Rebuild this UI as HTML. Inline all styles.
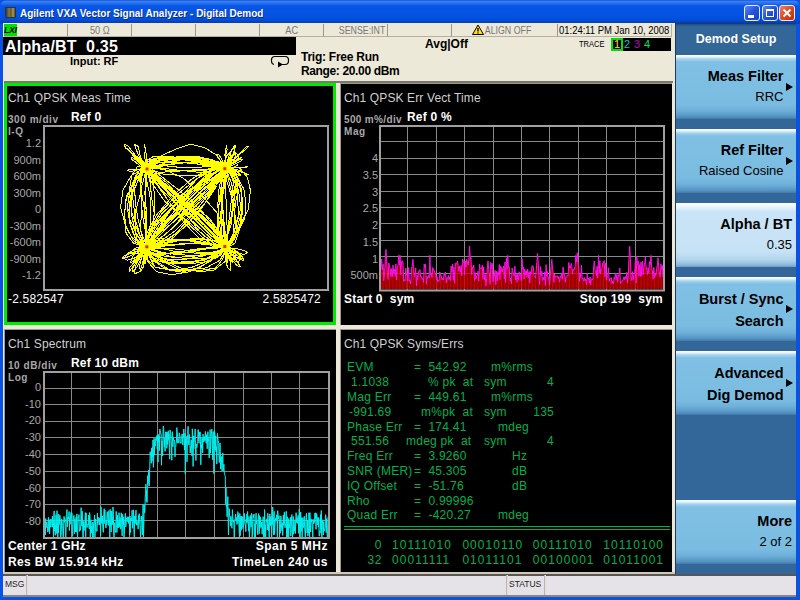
<!DOCTYPE html>
<html><head><meta charset="utf-8"><title>Agilent VXA Vector Signal Analyzer - Digital Demod</title>
<style>
html,body{margin:0;padding:0;}
body{width:800px;height:600px;overflow:hidden;position:relative;background:#ece9d8;font-family:"Liberation Sans",Arial,sans-serif;}
div{position:absolute;box-sizing:border-box;white-space:nowrap;}
#frame{left:0;top:0;width:800px;height:600px;background:#0852e4;}
#title{left:0;top:0;width:800px;height:24px;background:linear-gradient(#0a40c4 0px,#3a84f6 1px,#2a72f0 3px,#0656e6 6px,#0452e2 16px,#034cd8 20px,#023cb8 23px,#0a50d8 24px);border-radius:7px 7px 0 0;}
#ttext{left:20px;top:6px;font-size:11px;line-height:14px;font-weight:bold;color:#fff;text-shadow:1px 1px 0 #0a2a80;transform:scaleX(0.91);transform-origin:0 0}
#client{left:3px;top:23px;width:793px;height:573px;background:#ece9d8;}
.cell{top:24px;height:13px;border-left:1px solid #9c988c;border-bottom:1px solid #b4b0a4;font-size:11px;line-height:12px;color:#777;text-align:center;}
.cell span{display:inline-block;transform:scaleX(0.84);}
.btn{top:5px;width:16px;height:16px;border-radius:3px;border:1px solid #e8eefc;}
.panel{background:#000;}
.pb{border-top:1px solid #9c9a90;border-left:1px solid #9c9a90;}
.pt{font-size:12px;color:#d0d0d0;letter-spacing:0.12px}
.sm{font-size:10px;font-weight:bold;color:#a8a8a8;letter-spacing:0.55px}
.wb{font-size:12px;font-weight:bold;color:#fff;letter-spacing:0.2px}
.yl{text-align:right;line-height:14px;}
svg{position:absolute;left:0;top:0;}
.key{left:676px;width:120px;height:64px;background:linear-gradient(#ffffff 0px,#e4f2fb 2px,#a6d3ee 4px,#80c0e4 7px,#7abce1 49px,#6dafd8 56px,#5290c0 62px,#3f78a8 64px);}
.key.sel{background:linear-gradient(#ffffff 0px,#e8f4fc 4px,#c9e4f6 9px,#c6e2f5 49px,#b2d4ec 57px,#8cb8da 62px,#6a9cc4 64px);}
.k1{top:13px;font-size:14.5px;font-weight:bold;color:#000;}
.k1b{top:36px;}
.k2{top:34px;font-size:13px;color:#000;}
.arr{right:3px;top:27.5px;width:0;height:0;border-left:7px solid #000;border-top:4px solid transparent;border-bottom:4px solid transparent;}
.g{color:#00b050;font-size:12px;line-height:15px;letter-spacing:0.25px}
.sb{top:574px;height:22px;border-left:1px solid #fff;border-top:1px solid #fff;border-right:1px solid #9a98a0;font-size:9px;color:#000;line-height:20px;}
</style></head><body>
<div id="frame"></div>
<div id="title"></div>
<!-- title icon -->
<div style="left:5px;top:7px;width:11px;height:11px;background:linear-gradient(90deg,#3b3a2a,#8a7c3a 35%,#5b5430 55%,#b0a050 78%,#4a4630);border:1px solid #2a3050"></div>
<div id="ttext">Agilent VXA Vector Signal Analyzer - Digital Demod</div>
<div class="btn" style="left:744px;background:linear-gradient(135deg,#5a8af0,#2452dc 50%,#1a3ec4);"><div style="left:3px;top:9px;width:6px;height:3px;background:#fff"></div></div>
<div class="btn" style="left:762px;background:linear-gradient(135deg,#5a8af0,#2452dc 50%,#1a3ec4);"><div style="left:3px;top:3px;width:8px;height:8px;border:1px solid #fff;border-top:2px solid #fff"></div></div>
<div class="btn" style="left:779px;background:linear-gradient(135deg,#f08060,#e0481c 50%,#c02c08);"></div><svg width="800" height="600"><path d="M783.5 9.5L790.5 16.5M790.5 9.5L783.5 16.5" stroke="#fff" stroke-width="2"/></svg>

<div id="client"></div>

<!-- top status row -->
<div style="left:4px;top:24px;width:13px;height:12px;background:#00e000;font-size:9px;font-weight:bold;font-style:italic;line-height:12px;color:#000;letter-spacing:-0.5px">LXI</div>
<div style="left:4px;top:36px;width:668px;height:1px;background:#b4b0a4"></div>
<div class="cell" style="left:67px;width:64px;"><span>50 &#937;</span></div>
<div class="cell" style="left:131px;width:64px;"></div>
<div class="cell" style="left:195px;width:64px;"></div>
<div class="cell" style="left:259px;width:64px;"><span>AC</span></div>
<div class="cell" style="left:323px;width:64px;"><span style="margin-left:9px;transform:scaleX(0.8)">SENSE:INT</span></div>
<div class="cell" style="left:387px;width:64px;"></div>
<div class="cell" style="left:451px;width:106px;"><span style="margin-left:7px;transform:scaleX(0.8)">ALIGN OFF</span></div>
<div class="cell" style="left:557px;width:115px;color:#000;font-size:11px;border-right:1px solid #b4b0a4"><span style="transform:scaleX(0.86);margin-left:-8px;margin-right:-8px">01:24:11 PM Jan 10, 2008</span></div>
<svg width="800" height="600" style="pointer-events:none"><path d="M478 25L483.5 34.5H472.5Z" fill="#ffe000" stroke="#000" stroke-width="1" stroke-linejoin="round"/><path d="M478 28V31.5" stroke="#000" stroke-width="1.4"/><rect x="477.4" y="32.4" width="1.2" height="1.2" fill="#000"/></svg>

<!-- active function band -->
<div style="left:3px;top:37px;width:293px;height:18px;background:#000;"></div>
<div style="left:5px;top:36.5px;font-size:16px;font-weight:bold;color:#fff;line-height:20px;letter-spacing:0.2px">Alpha/BT&nbsp;&nbsp;0.35</div>
<div style="left:70px;top:55px;font-size:11px;font-weight:bold;color:#000;line-height:13px">Input: RF</div>
<div style="left:301px;top:50px;font-size:12px;font-weight:bold;color:#000;line-height:14px;letter-spacing:-0.25px">Trig: Free Run</div>
<div style="left:301px;top:64px;font-size:12px;font-weight:bold;color:#000;line-height:14px;letter-spacing:-0.36px">Range: 20.00 dBm</div>
<div style="left:425px;top:37px;font-size:12px;font-weight:bold;color:#000;line-height:14px">Avg|Off</div>
<svg width="800" height="600"><rect x="271.5" y="56.5" width="17" height="8" rx="3.5" fill="none" stroke="#000" stroke-width="1.2"/><rect x="274" y="62" width="8" height="5" fill="#ece9d8"/><path d="M278 61.5L283 64.5L278 67.5Z" fill="#000"/></svg>
<div style="left:579px;top:39px;font-size:9px;color:#000;line-height:11px;transform:scaleX(0.84);transform-origin:0 0">TRACE</div>
<div style="left:611px;top:38px;width:60px;height:13px;background:#000"></div>
<div style="left:611px;top:38px;width:12px;height:13px;border:2px solid #00e000;"></div>
<div style="left:614px;top:38px;font-size:11px;line-height:13px;color:#ffe000;">1</div>
<div style="left:624px;top:38px;font-size:11px;line-height:13px;color:#00c8c8;">2</div>
<div style="left:634px;top:38px;font-size:11px;line-height:13px;color:#c000c0;">3</div>
<div style="left:644px;top:38px;font-size:11px;line-height:13px;color:#00e060;">4</div>

<!-- panels -->
<div style="left:4px;top:81px;width:669px;height:492px;border-top:2px solid #7a786c;"></div>
<div class="panel" style="left:4px;top:83px;width:332px;height:242px;border:3px solid #00ea00;"></div>
<div class="panel pb" style="left:340px;top:83px;width:332px;height:242px;"></div>
<div class="panel pb" style="left:4px;top:329px;width:332px;height:243px;"></div>
<div class="panel pb" style="left:340px;top:329px;width:332px;height:243px;"></div>

<svg width="800" height="600">
<!-- IQ -->
<rect x="44" y="126" width="284" height="164" fill="none" stroke="#a0a0a0" stroke-width="2"/>
<polyline points="146.1,168.7 155.0,158.2 169.6,157.1 190.2,157.9 207.8,162.2 221.1,166.7 225.1,168.5 219.6,166.0 204.5,162.8 185.4,158.1 164.4,156.1 150.7,159.5 146.4,168.0 151.6,182.6 164.9,201.6 186.2,220.1 205.3,236.6 220.5,247.4 225.9,248.0 221.4,241.0 206.4,227.1 185.4,209.9 165.9,189.7 152.4,175.2 145.6,167.4 150.6,168.1 163.1,177.8 181.1,191.9 202.0,211.4 216.7,228.8 224.3,248.1 226.3,260.6 214.1,270.0 199.7,271.8 180.7,268.0 161.3,259.1 144.6,247.4 136.1,233.2 129.7,219.0 129.9,201.3 134.3,188.4 140.6,175.0 146.0,166.6 151.0,162.9 153.2,161.8 154.3,164.7 152.6,164.5 150.1,167.8 146.2,167.2 140.3,166.3 135.8,162.2 131.8,159.5 131.7,157.5 136.4,160.0 145.6,167.7 160.2,179.9 177.2,197.4 196.3,215.6 210.9,232.0 221.7,242.0 224.9,248.1 221.6,243.5 210.8,234.9 193.7,218.2 176.0,199.2 159.5,182.1 145.7,165.8 137.2,156.9 135.3,155.7 136.0,156.0 139.8,158.9 144.1,162.4 146.5,167.1 145.8,170.4 144.1,172.5 142.3,171.5 140.4,171.4 140.0,169.4 146.6,167.6 154.3,167.8 167.0,170.3 180.5,170.4 198.1,169.8 212.1,169.9 225.6,168.1 234.6,164.2 241.3,161.0 243.0,159.1 240.8,159.3 235.2,162.0 225.7,167.8 214.6,177.6 200.1,188.4 185.2,202.8 171.3,217.8 158.0,232.3 146.6,246.7 137.3,258.5 129.8,267.5 129.4,271.5 132.1,267.7 136.8,261.8 145.4,248.2 157.6,230.6 170.5,210.1 185.9,191.1 200.1,175.8 214.8,168.3 226.0,169.0 234.2,175.4 240.7,189.3 242.8,207.9 239.7,225.9 234.2,239.7 224.1,246.8 215.0,247.4 200.9,239.9 185.7,224.3 171.5,205.2 158.4,186.7 146.3,167.3 135.1,154.9 128.2,146.1 124.0,144.3 125.7,148.1 134.3,154.9 146.1,168.2 161.6,182.6 180.4,197.5 196.6,212.7 211.8,227.6 222.8,240.0 226.9,247.3 222.1,251.9 213.3,252.0 196.8,252.1 179.8,249.3 161.5,248.1 144.7,248.8 133.9,250.1 127.3,253.7 124.7,258.9 127.8,260.2 136.1,257.5 144.9,246.8 157.5,233.5 172.2,214.0 186.3,195.5 202.2,178.5 214.6,169.2 225.1,169.4 234.0,176.1 241.9,191.4 241.5,212.5 239.6,229.7 234.8,243.2 226.1,248.5 214.1,243.4 199.7,231.6 184.9,212.0 171.5,192.1 157.4,177.9 144.6,167.9 137.6,166.3 131.8,175.3 129.3,190.8 131.3,210.3 137.2,229.6 145.3,247.8 156.1,261.0 170.4,270.4 183.3,270.6 199.1,268.0 211.9,259.1 225.6,248.2 236.1,234.6 244.8,218.9 246.0,204.0 244.0,189.5 237.3,176.7 224.9,167.1 209.2,161.6 191.9,159.3 174.4,159.3 160.1,160.8 148.6,163.7 147.5,168.1 150.8,170.5 159.3,172.3 172.8,171.6 191.8,170.1 209.8,171.3 224.1,167.7 238.0,167.2 245.4,168.0 247.2,166.4 245.3,167.1 237.9,167.3 225.3,168.8 211.5,166.4 195.2,167.4 179.3,167.3 165.5,165.8 154.2,166.6 145.4,167.3 140.0,168.2 141.0,171.8 141.0,170.2 144.4,171.7 147.2,170.1 145.7,167.2 142.7,164.9 138.8,160.5 137.1,157.6 135.0,157.7 138.1,160.4 146.4,168.9 158.9,179.8 175.6,194.1 193.3,208.9 208.1,222.2 220.4,237.9 225.6,247.9 221.9,253.3 211.5,254.2 195.3,253.1 177.4,251.9 160.5,248.1 145.1,247.8 136.1,247.9 130.8,251.8 132.6,253.7 135.4,253.4 140.7,253.7 146.8,247.5 150.9,239.2 152.9,227.6 154.3,213.2 151.6,197.6 150.1,181.8 145.8,168.1 140.2,156.2 138.2,146.4 134.4,144.4 135.4,147.0 138.2,154.9 146.4,168.3 157.6,184.3 169.9,203.1 184.8,220.2 201.1,236.3 215.4,246.7 225.4,248.1 232.4,242.7 236.5,230.4 234.4,215.8 233.4,199.6 229.0,182.1 225.9,168.5 221.3,158.4 218.2,154.2 217.5,154.7 217.5,156.6 221.2,162.1 225.2,168.0 231.0,172.3 236.3,174.1 241.2,176.1 240.8,175.1 236.5,171.3 226.0,169.0 209.4,163.1 191.3,160.7 171.8,158.7 155.8,158.4 146.0,160.5 145.5,168.4 154.9,176.4 171.8,188.7 189.4,204.0 208.9,217.7 221.3,234.2 226.2,248.7 220.2,260.0 206.2,267.9 184.2,270.2 166.2,268.9 151.2,259.6 145.7,247.6 149.2,231.6 162.2,213.3 181.8,194.7 202.4,181.4 215.2,172.0 225.4,168.4 225.0,172.0 215.0,183.3 198.3,199.0 178.1,216.9 159.8,235.2 146.2,248.0 137.5,258.3 133.8,260.7 134.7,260.9 139.3,257.4 143.1,252.1 146.1,247.5 145.9,244.6 143.6,243.4 141.6,244.7 139.1,246.7 141.5,247.0 146.6,246.8 153.7,246.5 167.2,245.9 180.9,243.8 198.0,243.9 213.1,244.4 225.5,248.2 236.5,252.2 242.0,255.9 244.1,260.2 242.0,260.1 235.9,257.5 225.4,248.2 212.3,233.9 196.5,216.6 181.6,199.5 167.1,183.0 154.0,172.9 144.8,166.9 141.5,169.7 140.5,180.5 140.8,194.2 142.2,212.8 145.2,230.5 146.8,248.1 143.7,260.1 143.3,267.2 140.7,271.2 139.3,267.2 141.5,258.3 144.9,247.8 154.1,234.6 166.3,221.6 179.7,208.8 194.7,193.8 209.9,181.0 224.8,168.0 236.2,157.2 246.5,148.6 248.3,146.0 245.4,147.5 237.4,155.9 224.9,166.4 209.3,186.3 190.7,206.2 175.2,225.3 158.9,239.9 148.9,247.9 146.0,247.3 149.8,239.7 159.1,225.2 172.3,207.9 190.4,189.8 208.7,174.8 226.0,167.9 239.5,167.8 247.5,177.4 250.4,190.2 248.3,209.1 238.6,228.4 226.6,249.6 208.4,262.5 188.9,271.9 171.5,274.8 156.8,271.8 147.9,261.9 146.4,247.3 149.8,230.2 161.0,211.5 178.5,193.6 195.9,179.3 212.8,170.0 226.0,168.3 233.4,174.2 236.6,183.3 233.9,201.3 230.8,217.9 226.6,235.4 224.9,248.0 227.3,256.7 230.8,259.0 233.2,258.3 235.7,255.0 234.3,250.0 226.4,246.9 210.8,247.4 192.5,249.6 172.0,253.3 158.1,254.4 146.8,252.9 146.4,248.2 154.8,237.1 171.2,223.8 190.9,207.4 208.9,191.9 222.5,178.2 225.7,167.7 220.0,162.1 203.6,160.6 183.9,162.9 165.3,165.3 151.6,167.1 145.8,169.1 150.5,166.3 165.2,164.7 184.4,162.6 205.7,162.1 219.9,162.5 226.5,168.1 222.0,175.0 208.6,187.8 191.1,203.4 171.7,217.4 154.9,233.9 145.7,248.1 147.0,259.6 155.4,267.3 172.3,270.2 190.7,267.7 209.5,260.2 226.0,248.3 236.0,232.1 241.3,213.2 239.2,194.4 235.5,179.2 229.6,169.2 224.4,168.8 221.2,172.5 221.4,183.9 220.7,199.7 223.5,216.9 225.3,234.1 225.5,248.0 227.4,257.6 226.5,261.4 226.9,261.1 225.6,257.4 226.3,253.7 225.0,248.5 226.2,243.1 225.7,240.2 225.9,237.8 226.3,240.2 225.9,242.8 225.6,248.7 226.2,253.8 226.6,258.7 225.5,261.1 227.1,262.6 227.0,257.2 225.1,249.2 224.5,234.4 221.7,216.8 222.3,198.7 220.9,182.3 222.4,171.4 226.5,169.0 230.0,171.3 235.2,183.0 237.6,196.7 238.4,215.8 233.8,233.3 225.5,247.9 212.4,257.5 194.6,262.0 176.9,262.4 159.7,258.0 148.9,253.1 145.4,247.3 150.2,243.3 161.3,240.0 177.3,240.2 195.9,238.4 212.4,244.2 225.6,248.1 234.3,251.6 235.4,255.4 234.1,259.2 231.4,259.7 227.0,256.0 226.1,248.5 226.6,237.4 231.7,223.2 232.5,207.1 235.0,191.8 232.7,179.2 226.7,167.5 212.8,160.0 195.3,156.0 176.4,156.9 161.3,159.8 149.9,162.8 145.3,166.9 148.5,172.4 159.7,173.7 176.5,175.1 194.7,175.6 211.7,173.5 225.5,168.3 233.6,162.6 238.8,156.9 237.7,155.0 235.0,152.3 230.5,156.9 225.2,168.4 221.7,183.1 221.5,198.8 221.1,216.0 221.7,231.0 221.9,242.6 225.6,247.9 227.2,246.6 228.0,235.5 226.6,220.5 226.1,203.4 225.7,184.4 226.2,167.8 224.9,155.2 226.1,148.0 226.0,144.8 227.1,149.2 225.6,155.3 225.9,168.5 223.6,181.7 221.8,197.9 220.9,212.4 221.1,226.9 220.8,238.3 226.3,248.3 231.1,255.0 235.9,257.1 240.9,257.4 240.5,256.2 236.7,252.3 225.2,248.9 209.7,243.9 192.5,241.2 174.2,239.6 157.4,238.5 147.9,242.9 145.4,247.5 151.8,253.3 166.5,259.5 185.7,263.6 201.6,262.7 217.2,257.7 224.4,249.8 225.6,232.3 217.8,213.7 201.4,194.9 183.1,177.9 164.5,169.6 145.7,167.3 131.3,175.5 123.1,189.7 120.5,207.3 126.0,226.7 133.3,240.6 146.5,248.6 160.6,247.0 174.9,236.3 190.2,220.6 205.1,202.8 216.6,184.2 225.8,166.2 230.6,157.9 235.4,153.3 234.5,152.5 231.6,157.1 229.3,162.4 225.9,167.3 223.0,171.9 218.3,175.6 216.2,175.2 219.2,174.9 220.8,172.1 225.5,167.9 230.9,163.7 236.7,159.3 242.2,157.1 241.1,157.9 235.9,160.7 225.3,168.3 211.1,179.0 191.0,192.3 173.0,206.7 157.1,222.6 147.5,235.8 145.2,246.7 153.1,255.3 167.6,259.2 184.4,259.5 202.1,256.2 216.6,251.7 225.8,246.7 225.4,244.7 217.3,240.6 202.4,239.7 182.5,239.8 164.2,243.9 145.9,247.8 132.1,252.9 124.2,255.9 122.6,258.1 125.6,257.8 133.3,254.6 146.5,248.8 159.7,238.5 174.9,226.2 189.5,211.9 204.6,197.3 215.8,181.3 225.3,167.2 232.1,157.1 234.9,148.0 235.8,145.1 233.4,146.9 229.5,154.2 225.4,168.0 221.4,184.8 219.1,204.2 217.3,224.3 217.7,239.6 221.4,247.9 225.7,247.8 231.2,239.2 236.2,225.3 241.3,206.1 241.3,188.7 236.2,173.9 225.4,167.0 209.5,168.4 191.2,179.4 172.6,196.0 156.6,215.0 147.0,232.6 145.4,248.8 153.2,259.4 167.6,263.5 185.3,263.9 204.7,259.1 219.0,252.5 226.2,247.9 224.1,242.5 214.3,240.4 197.7,238.2 180.1,240.0 159.6,243.6 145.5,249.0 135.2,252.3 131.3,259.5 130.8,262.4 133.8,261.5 139.0,256.9 145.3,247.6 150.7,233.9 153.9,217.8 154.8,199.2 153.4,183.9 150.5,173.7 146.4,166.8 139.2,170.5 134.6,179.0 132.0,195.4 131.2,213.3 135.2,231.4 146.2,248.2 160.4,260.0 179.3,269.6 199.2,270.6 215.4,268.1 222.8,259.1 226.1,247.6 219.9,234.0 204.0,216.9 186.0,203.2 168.3,188.4 152.5,178.0 146.1,168.0 147.5,161.6 156.4,158.5 174.3,158.6 193.0,160.9 212.0,165.9 227.1,168.3 234.9,172.3 237.2,174.8 236.3,175.3 232.3,173.7 228.9,172.0 224.7,167.2 224.6,161.9 225.7,156.6 229.9,153.3 231.0,153.8 229.6,158.4 225.2,167.6 217.0,181.0 204.9,199.1 190.9,216.6 175.2,234.3 160.8,243.9 146.0,247.5 133.7,243.3 126.1,233.3 124.3,217.5 125.9,199.6 133.4,181.4 146.2,166.3 163.3,159.6 179.8,157.7 198.0,157.9 212.3,161.9 223.3,165.4 225.4,168.2 220.6,168.9 209.4,166.6 194.7,163.3 176.5,162.1 159.3,162.4 146.6,168.6 135.6,175.8 131.0,188.7 133.6,203.3 134.9,218.4 139.9,234.5 145.3,247.6 150.2,257.6 153.8,264.1 154.6,266.2 153.2,263.7 149.7,257.7 144.7,248.0 141.3,232.7 138.1,219.2 135.4,203.1 134.7,189.2 139.0,178.0 145.5,168.4 156.6,163.0 169.5,161.3 185.4,162.8 201.1,164.5 214.6,166.4 226.2,167.2 234.2,167.1 237.4,165.0 236.4,163.0 233.7,162.3 229.7,162.1 225.0,168.7 221.7,176.4 219.1,188.3 217.8,204.5 218.6,218.3 221.3,234.4 225.6,247.6 230.5,258.4 237.2,265.7 240.1,266.6 238.9,264.3 234.5,257.2 225.3,247.4 211.5,235.9 194.9,219.2 176.7,204.1 160.9,189.6 150.2,177.2 146.5,168.3 150.4,161.3 161.5,159.3 177.2,157.4 194.3,161.8 212.3,165.6 226.9,168.1 233.5,168.9 236.3,171.0 236.2,172.0 232.0,168.3 227.8,168.1 226.7,168.2 225.8,167.5 227.5,169.4 229.0,170.5 231.3,169.6 230.3,170.1 226.2,167.5 217.9,164.8 205.8,160.8 190.3,158.6 174.8,159.5 158.2,160.5 146.2,168.1 136.2,178.3 129.4,193.1 127.3,208.2 130.2,225.1 135.6,239.6 146.0,247.9 157.8,252.4 170.5,254.1 185.7,252.5 200.9,248.5 214.5,247.7 226.3,247.0 234.9,249.9 240.9,254.8 243.1,257.9 242.0,258.8 237.2,255.5 226.6,248.3 213.6,235.7 198.2,218.9 180.4,200.8 166.5,185.1 154.1,173.3 146.6,166.6 142.3,169.8 139.7,179.7 141.8,193.7 144.6,210.6 145.6,230.0 145.3,247.8 142.7,262.5 139.7,271.7 134.5,273.9 134.4,270.7 136.8,262.7 146.3,248.6 161.5,230.4 178.6,213.0 198.0,194.8 215.3,179.2 224.1,169.7 225.2,167.6 217.1,171.9 201.3,182.6 180.6,198.6 162.5,216.9 150.2,232.2 146.7,246.6 150.4,256.7 167.1,262.5 186.2,261.8 204.3,260.1 218.6,253.6 225.9,249.4 221.5,243.3 209.0,239.4 190.9,239.4 170.3,239.6 154.5,243.7 146.1,247.7 147.1,252.1 157.5,255.1 174.0,257.5 192.6,256.4 211.0,253.0 227.3,247.5 234.6,238.8 237.0,225.2 234.0,210.3 231.3,195.5 226.6,180.8 225.3,167.2 226.1,156.5 230.1,152.5 234.2,147.3 234.8,150.0 232.8,156.9 225.6,168.2 211.9,181.3 195.3,196.5 177.7,213.6 161.2,226.7 151.1,239.1 145.1,246.7 148.9,252.0 158.6,254.0 172.2,252.8 191.1,250.2 209.1,248.5 224.9,247.3 237.7,248.8 244.9,251.0 247.4,252.7 244.4,254.4 235.5,252.8 225.4,247.5 213.3,240.4 199.8,228.1 182.9,212.1 171.3,197.1 157.2,181.3 146.8,168.6 136.2,158.3 129.8,151.7 127.9,148.6 130.4,152.0 135.7,159.7 144.2,167.5 159.6,178.7 173.5,192.0 189.7,207.3 204.3,220.9 215.9,233.4 224.8,248.3 229.6,258.2 231.0,266.5 230.2,270.2 227.8,267.9 225.1,259.5 225.5,246.9 227.5,231.8 229.9,213.0 231.9,195.2 233.4,181.0 231.9,169.8 226.6,166.8 217.0,171.7 202.3,184.4 186.8,198.9 172.1,216.6 157.9,234.3 146.8,247.7 137.1,257.2 135.5,261.1 133.9,260.1 139.3,258.8 142.4,254.0 145.8,247.1 148.0,242.8 150.1,240.7 148.9,238.9 148.8,239.8 147.2,243.0 146.0,247.5 145.3,253.1 144.8,259.6 144.1,263.1 145.6,263.7 146.0,257.5 145.7,246.8 146.4,232.5 146.4,214.3 144.9,193.7 145.5,178.7 145.3,170.2 145.1,168.9 146.2,174.6 145.6,187.3 146.0,206.4 146.4,224.6 146.2,239.6 146.0,247.3 147.0,246.8 145.1,240.4 145.6,224.8 144.8,205.7 146.1,186.0 146.5,168.6 146.3,153.8 144.6,146.6 144.4,144.6 145.3,147.8 144.7,157.1 146.4,167.4 146.6,180.8 149.8,194.2 150.9,207.7 150.7,221.8 148.4,236.2 145.6,246.7 141.4,258.5 136.7,267.4 132.9,272.0 132.4,268.9 136.7,260.8 146.7,247.0 158.5,228.8 176.3,209.4 194.4,189.3 210.8,175.7 220.9,166.8 226.0,167.2 221.5,177.7 209.9,193.5 193.5,212.5 175.9,230.4 159.1,242.2 146.0,248.4 137.2,242.1 135.3,231.0 135.1,212.6 140.5,193.6 141.3,177.2 145.3,168.1 145.2,166.7 145.0,174.9 141.1,188.5 141.8,209.0 140.3,229.7 147.1,247.4 154.5,261.0 166.4,269.5 181.4,272.1 198.5,268.2 213.0,259.3 224.1,247.1 236.5,233.5 241.9,218.9 242.4,203.3 241.6,189.9 234.1,177.1 225.8,166.8 214.1,160.8 200.1,157.8 186.6,159.1 171.0,161.1 158.0,165.3 145.4,167.2 136.0,170.3 131.1,171.6 127.6,170.6 128.8,169.0 135.6,169.6 145.2,168.8 158.8,167.7 173.7,169.7 189.0,171.2 203.5,172.8 215.6,169.7 226.0,167.1 232.8,162.9 234.7,159.3 235.3,154.6 233.2,153.8 230.5,158.8 226.4,168.0 221.6,182.0 219.7,198.2 217.7,216.5 218.9,232.3 222.1,244.1 226.1,248.8 230.3,244.3 233.0,234.3 234.4,220.0 235.3,201.7 231.8,184.6 225.9,167.8 216.3,154.9 204.5,147.6 190.3,144.2 175.3,149.4 159.3,156.7 146.4,168.0 133.9,182.3 126.5,196.5 124.5,213.7 125.6,225.7 132.2,237.9 146.8,247.5 163.0,252.7 181.6,254.7 199.0,256.1 214.0,253.6 223.1,250.7 225.2,247.3 221.7,245.5 208.9,244.3 192.7,243.3 175.0,245.0 160.0,245.5 146.3,247.1 137.6,249.1 135.0,249.1 136.7,249.2 140.4,248.8 142.4,247.3 146.4,247.7 145.6,247.5 143.3,249.4 140.8,248.2 140.0,249.9 141.8,248.9 145.8,246.6 155.6,244.9 168.0,244.6 184.5,243.8 200.7,242.5 213.5,244.5 225.3,247.5 233.3,253.4 234.5,256.7 235.0,259.9 232.9,262.3 227.8,257.6 225.4,248.2 223.5,233.0 223.4,217.5 222.4,198.0 225.1,182.5 225.6,172.1 226.5,167.3 225.8,173.0 223.9,183.4 222.5,198.7 220.4,215.7 221.7,233.7 225.0,248.2 230.2,256.9 236.4,262.0 238.6,262.1 240.3,258.5 235.1,252.9 224.6,245.9 210.8,243.8 190.7,240.1 172.4,239.5 156.1,240.8 145.5,242.6 144.5,247.1 155.7,251.6 169.7,256.3 188.4,259.0 208.0,258.1 220.8,255.0 225.2,248.1 221.0,236.4 208.6,224.0 190.5,208.4 171.7,192.0 154.9,178.8 145.5,167.3 145.5,161.0 153.3,156.5 169.0,157.5 187.4,158.6 207.6,162.9 224.9,167.4 240.0,170.4 245.6,173.6 248.4,175.0 243.9,172.6 236.9,171.0 226.2,166.9 211.6,163.6 198.6,159.2 183.3,158.1 171.4,158.3 157.0,161.6 144.7,167.2 136.0,180.0 131.2,194.0 128.9,209.6 130.5,224.1 135.1,237.5 145.6,248.2 160.2,252.5 173.9,254.1 190.1,251.8 204.5,249.1 216.4,248.1 226.5,247.5 230.4,250.3 231.0,254.1 229.4,258.2 227.3,259.8 226.1,256.2 225.6,247.6 228.2,232.5 231.9,214.6 237.2,195.7 237.5,178.8 233.6,168.8 225.5,166.9 211.2,174.1 193.6,188.6 174.7,206.3 157.3,224.6 147.2,240.6 145.5,248.4 151.7,246.7 166.3,239.9 184.8,227.2 202.9,206.5 216.5,186.2" fill="none" stroke="#ffff00" stroke-width="1" stroke-linejoin="round" shape-rendering="crispEdges"/>
<g fill="#ff2000"><rect x="145.5" y="167.5" width="3" height="3"/><rect x="223.3" y="167.2" width="3" height="3"/><rect x="145.3" y="245.3" width="3" height="3"/><rect x="223.3" y="245" width="3" height="3"/></g>
<!-- EVM -->
<g stroke="#888888" stroke-width="1" shape-rendering="crispEdges"><path d="M407.5 126.0V290.0"/><path d="M436.5 126.0V290.0"/><path d="M464.5 126.0V290.0"/><path d="M493.5 126.0V290.0"/><path d="M521.5 126.0V290.0"/><path d="M549.5 126.0V290.0"/><path d="M578.5 126.0V290.0"/><path d="M606.5 126.0V290.0"/><path d="M635.5 126.0V290.0"/><path d="M380.0 141.5H664.0"/><path d="M380.0 158.5H664.0"/><path d="M380.0 174.5H664.0"/><path d="M380.0 191.5H664.0"/><path d="M380.0 207.5H664.0"/><path d="M380.0 223.5H664.0"/><path d="M380.0 240.5H664.0"/><path d="M380.0 256.5H664.0"/><path d="M380.0 273.5H664.0"/></g>
<polygon points="381.0,289.0 381.0,269.0 381.7,259.1 382.4,270.0 383.1,264.1 383.8,280.7 384.5,273.7 385.3,259.4 386.0,249.5 386.7,261.4 387.4,272.9 388.1,279.6 388.8,263.1 389.5,265.9 390.2,268.8 390.9,276.7 391.6,268.6 392.3,276.8 393.0,265.1 393.8,273.6 394.5,269.4 395.2,276.5 395.9,264.1 396.6,280.1 397.3,266.1 398.0,265.5 398.7,255.4 399.4,265.4 400.1,255.4 400.8,274.8 401.5,261.3 402.3,261.0 403.0,262.4 403.7,281.4 404.4,279.5 405.1,280.9 405.8,268.2 406.5,274.9 407.2,273.6 407.9,281.1 408.6,267.6 409.3,281.6 410.1,280.3 410.8,284.0 411.5,267.5 412.2,266.8 412.9,259.4 413.6,268.3 414.3,276.8 415.0,275.3 415.7,267.9 416.4,285.8 417.1,275.0 417.8,279.8 418.6,271.3 419.3,271.6 420.0,269.6 420.7,277.3 421.4,276.4 422.1,279.3 422.8,277.9 423.5,282.5 424.2,264.1 424.9,267.7 425.6,264.4 426.3,284.2 427.1,276.3 427.8,278.7 428.5,275.3 429.2,277.6 429.9,255.4 430.6,275.3 431.3,273.0 432.0,277.7 432.7,267.5 433.4,269.8 434.1,270.3 434.8,272.1 435.6,274.4 436.3,279.7 437.0,276.4 437.7,282.0 438.4,280.1 439.1,281.3 439.8,271.9 440.5,275.6 441.2,275.3 441.9,280.1 442.6,278.3 443.4,280.0 444.1,273.1 444.8,275.6 445.5,272.2 446.2,283.0 446.9,277.7 447.6,279.0 448.3,275.2 449.0,279.9 449.7,277.1 450.4,280.5 451.1,266.0 451.9,271.9 452.6,263.9 453.3,280.4 454.0,267.1 454.7,283.5 455.4,263.3 456.1,264.4 456.8,263.2 457.5,261.0 458.2,266.0 458.9,271.5 459.6,266.1 460.4,272.3 461.1,265.4 461.8,275.7 462.5,258.9 463.2,261.0 463.9,261.0 464.6,274.9 465.3,261.0 466.0,267.0 466.7,259.2 467.4,262.3 468.2,265.1 468.9,259.4 469.6,246.2 470.3,259.4 471.0,257.7 471.7,274.5 472.4,266.9 473.1,268.2 473.8,265.1 474.5,280.4 475.2,272.6 475.9,279.1 476.7,275.8 477.4,275.4 478.1,271.2 478.8,281.1 479.5,264.1 480.2,269.2 480.9,268.3 481.6,268.4 482.3,265.2 483.0,279.2 483.7,267.1 484.4,280.0 485.2,274.4 485.9,286.1 486.6,278.8 487.3,268.0 488.0,261.0 488.7,269.4 489.4,274.1 490.1,284.6 490.8,262.5 491.5,268.6 492.2,263.4 492.9,281.7 493.7,274.7 494.4,276.5 495.1,270.3 495.8,284.8 496.5,271.4 497.2,281.2 497.9,271.7 498.6,275.3 499.3,264.5 500.0,279.7 500.7,265.9 501.5,269.2 502.2,271.8 502.9,268.4 503.6,266.1 504.3,278.8 505.0,261.9 505.7,282.6 506.4,258.2 507.1,269.4 507.8,255.4 508.5,267.3 509.2,267.0 510.0,280.9 510.7,278.0 511.4,283.9 512.1,268.2 512.8,271.9 513.5,273.7 514.2,276.2 514.9,266.2 515.6,279.9 516.3,274.4 517.0,282.6 517.7,273.5 518.5,280.2 519.2,271.8 519.9,275.5 520.6,274.3 521.3,280.9 522.0,258.8 522.7,269.2 523.4,267.1 524.1,279.0 524.8,269.1 525.5,274.8 526.3,270.6 527.0,277.3 527.7,269.3 528.4,277.8 529.1,271.5 529.8,283.3 530.5,271.7 531.2,274.1 531.9,265.9 532.6,265.9 533.3,266.5 534.0,275.7 534.8,276.2 535.5,278.1 536.2,270.0 536.9,262.4 537.6,253.5 538.3,264.1 539.0,276.8 539.7,284.5 540.4,266.5 541.1,276.3 541.8,271.2 542.5,280.5 543.3,277.4 544.0,280.0 544.7,271.9 545.4,285.5 546.1,264.6 546.8,276.5 547.5,271.6 548.2,279.1 548.9,277.3 549.6,285.1 550.3,274.9 551.1,266.8 551.8,259.4 552.5,268.3 553.2,272.6 553.9,282.6 554.6,274.1 555.3,276.8 556.0,275.9 556.7,276.2 557.4,275.7 558.1,278.9 558.8,276.5 559.6,282.2 560.3,275.8 561.0,277.9 561.7,273.4 562.4,279.4 563.1,267.1 563.8,274.7 564.5,273.4 565.2,282.5 565.9,276.8 566.6,277.2 567.3,274.9 568.1,275.9 568.8,262.4 569.5,267.0 570.2,268.3 570.9,265.3 571.6,263.4 572.3,274.2 573.0,269.1 573.7,270.2 574.4,269.0 575.1,266.6 575.8,255.4 576.6,261.9 577.3,252.8 578.0,263.7 578.7,267.1 579.4,281.5 580.1,272.8 580.8,277.6 581.5,265.1 582.2,279.0 582.9,277.9 583.6,281.2 584.4,277.6 585.1,281.2 585.8,279.0 586.5,285.0 587.2,273.8 587.9,279.7 588.6,278.2 589.3,283.3 590.0,277.0 590.7,285.0 591.4,278.8 592.1,279.2 592.9,279.8 593.6,268.0 594.3,261.0 595.0,269.4 595.7,270.2 596.4,276.0 597.1,266.3 597.8,278.3 598.5,255.4 599.2,272.9 599.9,260.9 600.6,273.9 601.4,269.4 602.1,268.1 602.8,262.6 603.5,262.7 604.2,260.5 604.9,276.9 605.6,263.2 606.3,280.0 607.0,277.1 607.7,275.6 608.4,267.8 609.2,281.4 609.9,278.2 610.6,278.8 611.3,277.6 612.0,283.9 612.7,281.1 613.4,283.7 614.1,277.3 614.8,279.3 615.5,272.9 616.2,279.7 616.9,274.4 617.7,282.2 618.4,275.4 619.1,276.0 619.8,268.1 620.5,283.6 621.2,281.8 621.9,282.1 622.6,280.1 623.3,279.8 624.0,276.7 624.7,279.8 625.4,276.5 626.2,279.1 626.9,272.2 627.6,283.2 628.3,274.9 629.0,259.4 629.7,246.2 630.4,259.4 631.1,276.5 631.8,280.7 632.5,271.7 633.2,280.0 633.9,274.5 634.7,272.4 635.4,260.6 636.1,283.0 636.8,256.2 637.5,264.8 638.2,261.2 638.9,276.3 639.6,264.5 640.3,276.5 641.0,262.1 641.7,275.8 642.5,261.0 643.2,274.7 643.9,266.1 644.6,264.8 645.3,256.8 646.0,266.4 646.7,269.1 647.4,274.7 648.1,267.7 648.8,273.4 649.5,261.6 650.2,264.9 651.0,255.4 651.7,268.3 652.4,270.6 653.1,279.4 653.8,267.4 654.5,278.1 655.2,273.1 655.9,276.2 656.6,268.4 657.3,265.6 658.0,257.7 658.7,267.1 659.5,274.1 660.2,277.3 660.9,263.7 661.6,269.4 662.3,265.6 663.0,277.3 663.0,289.0" fill="#800000" fill-opacity="0.6"/>
<path d="M381.0 289.0V269.0M382.4 289.0V270.0M383.8 289.0V280.7M385.3 289.0V259.4M386.7 289.0V261.4M388.1 289.0V279.6M389.5 289.0V265.9M390.9 289.0V276.7M392.3 289.0V276.8M393.8 289.0V273.6M395.2 289.0V276.5M396.6 289.0V280.1M398.0 289.0V265.5M399.4 289.0V265.4M400.8 289.0V274.8M402.3 289.0V261.0M403.7 289.0V281.4M405.1 289.0V280.9M406.5 289.0V274.9M407.9 289.0V281.1M409.3 289.0V281.6M410.8 289.0V284.0M412.2 289.0V266.8M413.6 289.0V268.3M415.0 289.0V275.3M416.4 289.0V285.8M417.8 289.0V279.8M419.3 289.0V271.6M420.7 289.0V277.3M422.1 289.0V279.3M423.5 289.0V282.5M424.9 289.0V267.7M426.3 289.0V284.2M427.8 289.0V278.7M429.2 289.0V277.6M430.6 289.0V275.3M432.0 289.0V277.7M433.4 289.0V269.8M434.8 289.0V272.1M436.3 289.0V279.7M437.7 289.0V282.0M439.1 289.0V281.3M440.5 289.0V275.6M441.9 289.0V280.1M443.4 289.0V280.0M444.8 289.0V275.6M446.2 289.0V283.0M447.6 289.0V279.0M449.0 289.0V279.9M450.4 289.0V280.5M451.9 289.0V271.9M453.3 289.0V280.4M454.7 289.0V283.5M456.1 289.0V264.4M457.5 289.0V261.0M458.9 289.0V271.5M460.4 289.0V272.3M461.8 289.0V275.7M463.2 289.0V261.0M464.6 289.0V274.9M466.0 289.0V267.0M467.4 289.0V262.3M468.9 289.0V259.4M470.3 289.0V259.4M471.7 289.0V274.5M473.1 289.0V268.2M474.5 289.0V280.4M475.9 289.0V279.1M477.4 289.0V275.4M478.8 289.0V281.1M480.2 289.0V269.2M481.6 289.0V268.4M483.0 289.0V279.2M484.4 289.0V280.0M485.9 289.0V286.1M487.3 289.0V268.0M488.7 289.0V269.4M490.1 289.0V284.6M491.5 289.0V268.6M492.9 289.0V281.7M494.4 289.0V276.5M495.8 289.0V284.8M497.2 289.0V281.2M498.6 289.0V275.3M500.0 289.0V279.7M501.5 289.0V269.2M502.9 289.0V268.4M504.3 289.0V278.8M505.7 289.0V282.6M507.1 289.0V269.4M508.5 289.0V267.3M510.0 289.0V280.9M511.4 289.0V283.9M512.8 289.0V271.9M514.2 289.0V276.2M515.6 289.0V279.9M517.0 289.0V282.6M518.5 289.0V280.2M519.9 289.0V275.5M521.3 289.0V280.9M522.7 289.0V269.2M524.1 289.0V279.0M525.5 289.0V274.8M527.0 289.0V277.3M528.4 289.0V277.8M529.8 289.0V283.3M531.2 289.0V274.1M532.6 289.0V265.9M534.0 289.0V275.7M535.5 289.0V278.1M536.9 289.0V262.4M538.3 289.0V264.1M539.7 289.0V284.5M541.1 289.0V276.3M542.5 289.0V280.5M544.0 289.0V280.0M545.4 289.0V285.5M546.8 289.0V276.5M548.2 289.0V279.1M549.6 289.0V285.1M551.1 289.0V266.8M552.5 289.0V268.3M553.9 289.0V282.6M555.3 289.0V276.8M556.7 289.0V276.2M558.1 289.0V278.9M559.6 289.0V282.2M561.0 289.0V277.9M562.4 289.0V279.4M563.8 289.0V274.7M565.2 289.0V282.5M566.6 289.0V277.2M568.1 289.0V275.9M569.5 289.0V267.0M570.9 289.0V265.3M572.3 289.0V274.2M573.7 289.0V270.2M575.1 289.0V266.6M576.6 289.0V261.9M578.0 289.0V263.7M579.4 289.0V281.5M580.8 289.0V277.6M582.2 289.0V279.0M583.6 289.0V281.2M585.1 289.0V281.2M586.5 289.0V285.0M587.9 289.0V279.7M589.3 289.0V283.3M590.7 289.0V285.0M592.1 289.0V279.2M593.6 289.0V268.0M595.0 289.0V269.4M596.4 289.0V276.0M597.8 289.0V278.3M599.2 289.0V272.9M600.6 289.0V273.9M602.1 289.0V268.1M603.5 289.0V262.7M604.9 289.0V276.9M606.3 289.0V280.0M607.7 289.0V275.6M609.2 289.0V281.4M610.6 289.0V278.8M612.0 289.0V283.9M613.4 289.0V283.7M614.8 289.0V279.3M616.2 289.0V279.7M617.7 289.0V282.2M619.1 289.0V276.0M620.5 289.0V283.6M621.9 289.0V282.1M623.3 289.0V279.8M624.7 289.0V279.8M626.2 289.0V279.1M627.6 289.0V283.2M629.0 289.0V259.4M630.4 289.0V259.4M631.8 289.0V280.7M633.2 289.0V280.0M634.7 289.0V272.4M636.1 289.0V283.0M637.5 289.0V264.8M638.9 289.0V276.3M640.3 289.0V276.5M641.7 289.0V275.8M643.2 289.0V274.7M644.6 289.0V264.8M646.0 289.0V266.4M647.4 289.0V274.7M648.8 289.0V273.4M650.2 289.0V264.9M651.7 289.0V268.3M653.1 289.0V279.4M654.5 289.0V278.1M655.9 289.0V276.2M657.3 289.0V265.6M658.7 289.0V267.1M660.2 289.0V277.3M661.6 289.0V269.4M663.0 289.0V277.3" stroke="#ff0000" stroke-width="0.75" fill="none"/>
<polyline points="381.0,269.0 381.7,259.1 382.4,270.0 383.1,264.1 383.8,280.7 384.5,273.7 385.3,259.4 386.0,249.5 386.7,261.4 387.4,272.9 388.1,279.6 388.8,263.1 389.5,265.9 390.2,268.8 390.9,276.7 391.6,268.6 392.3,276.8 393.0,265.1 393.8,273.6 394.5,269.4 395.2,276.5 395.9,264.1 396.6,280.1 397.3,266.1 398.0,265.5 398.7,255.4 399.4,265.4 400.1,255.4 400.8,274.8 401.5,261.3 402.3,261.0 403.0,262.4 403.7,281.4 404.4,279.5 405.1,280.9 405.8,268.2 406.5,274.9 407.2,273.6 407.9,281.1 408.6,267.6 409.3,281.6 410.1,280.3 410.8,284.0 411.5,267.5 412.2,266.8 412.9,259.4 413.6,268.3 414.3,276.8 415.0,275.3 415.7,267.9 416.4,285.8 417.1,275.0 417.8,279.8 418.6,271.3 419.3,271.6 420.0,269.6 420.7,277.3 421.4,276.4 422.1,279.3 422.8,277.9 423.5,282.5 424.2,264.1 424.9,267.7 425.6,264.4 426.3,284.2 427.1,276.3 427.8,278.7 428.5,275.3 429.2,277.6 429.9,255.4 430.6,275.3 431.3,273.0 432.0,277.7 432.7,267.5 433.4,269.8 434.1,270.3 434.8,272.1 435.6,274.4 436.3,279.7 437.0,276.4 437.7,282.0 438.4,280.1 439.1,281.3 439.8,271.9 440.5,275.6 441.2,275.3 441.9,280.1 442.6,278.3 443.4,280.0 444.1,273.1 444.8,275.6 445.5,272.2 446.2,283.0 446.9,277.7 447.6,279.0 448.3,275.2 449.0,279.9 449.7,277.1 450.4,280.5 451.1,266.0 451.9,271.9 452.6,263.9 453.3,280.4 454.0,267.1 454.7,283.5 455.4,263.3 456.1,264.4 456.8,263.2 457.5,261.0 458.2,266.0 458.9,271.5 459.6,266.1 460.4,272.3 461.1,265.4 461.8,275.7 462.5,258.9 463.2,261.0 463.9,261.0 464.6,274.9 465.3,261.0 466.0,267.0 466.7,259.2 467.4,262.3 468.2,265.1 468.9,259.4 469.6,246.2 470.3,259.4 471.0,257.7 471.7,274.5 472.4,266.9 473.1,268.2 473.8,265.1 474.5,280.4 475.2,272.6 475.9,279.1 476.7,275.8 477.4,275.4 478.1,271.2 478.8,281.1 479.5,264.1 480.2,269.2 480.9,268.3 481.6,268.4 482.3,265.2 483.0,279.2 483.7,267.1 484.4,280.0 485.2,274.4 485.9,286.1 486.6,278.8 487.3,268.0 488.0,261.0 488.7,269.4 489.4,274.1 490.1,284.6 490.8,262.5 491.5,268.6 492.2,263.4 492.9,281.7 493.7,274.7 494.4,276.5 495.1,270.3 495.8,284.8 496.5,271.4 497.2,281.2 497.9,271.7 498.6,275.3 499.3,264.5 500.0,279.7 500.7,265.9 501.5,269.2 502.2,271.8 502.9,268.4 503.6,266.1 504.3,278.8 505.0,261.9 505.7,282.6 506.4,258.2 507.1,269.4 507.8,255.4 508.5,267.3 509.2,267.0 510.0,280.9 510.7,278.0 511.4,283.9 512.1,268.2 512.8,271.9 513.5,273.7 514.2,276.2 514.9,266.2 515.6,279.9 516.3,274.4 517.0,282.6 517.7,273.5 518.5,280.2 519.2,271.8 519.9,275.5 520.6,274.3 521.3,280.9 522.0,258.8 522.7,269.2 523.4,267.1 524.1,279.0 524.8,269.1 525.5,274.8 526.3,270.6 527.0,277.3 527.7,269.3 528.4,277.8 529.1,271.5 529.8,283.3 530.5,271.7 531.2,274.1 531.9,265.9 532.6,265.9 533.3,266.5 534.0,275.7 534.8,276.2 535.5,278.1 536.2,270.0 536.9,262.4 537.6,253.5 538.3,264.1 539.0,276.8 539.7,284.5 540.4,266.5 541.1,276.3 541.8,271.2 542.5,280.5 543.3,277.4 544.0,280.0 544.7,271.9 545.4,285.5 546.1,264.6 546.8,276.5 547.5,271.6 548.2,279.1 548.9,277.3 549.6,285.1 550.3,274.9 551.1,266.8 551.8,259.4 552.5,268.3 553.2,272.6 553.9,282.6 554.6,274.1 555.3,276.8 556.0,275.9 556.7,276.2 557.4,275.7 558.1,278.9 558.8,276.5 559.6,282.2 560.3,275.8 561.0,277.9 561.7,273.4 562.4,279.4 563.1,267.1 563.8,274.7 564.5,273.4 565.2,282.5 565.9,276.8 566.6,277.2 567.3,274.9 568.1,275.9 568.8,262.4 569.5,267.0 570.2,268.3 570.9,265.3 571.6,263.4 572.3,274.2 573.0,269.1 573.7,270.2 574.4,269.0 575.1,266.6 575.8,255.4 576.6,261.9 577.3,252.8 578.0,263.7 578.7,267.1 579.4,281.5 580.1,272.8 580.8,277.6 581.5,265.1 582.2,279.0 582.9,277.9 583.6,281.2 584.4,277.6 585.1,281.2 585.8,279.0 586.5,285.0 587.2,273.8 587.9,279.7 588.6,278.2 589.3,283.3 590.0,277.0 590.7,285.0 591.4,278.8 592.1,279.2 592.9,279.8 593.6,268.0 594.3,261.0 595.0,269.4 595.7,270.2 596.4,276.0 597.1,266.3 597.8,278.3 598.5,255.4 599.2,272.9 599.9,260.9 600.6,273.9 601.4,269.4 602.1,268.1 602.8,262.6 603.5,262.7 604.2,260.5 604.9,276.9 605.6,263.2 606.3,280.0 607.0,277.1 607.7,275.6 608.4,267.8 609.2,281.4 609.9,278.2 610.6,278.8 611.3,277.6 612.0,283.9 612.7,281.1 613.4,283.7 614.1,277.3 614.8,279.3 615.5,272.9 616.2,279.7 616.9,274.4 617.7,282.2 618.4,275.4 619.1,276.0 619.8,268.1 620.5,283.6 621.2,281.8 621.9,282.1 622.6,280.1 623.3,279.8 624.0,276.7 624.7,279.8 625.4,276.5 626.2,279.1 626.9,272.2 627.6,283.2 628.3,274.9 629.0,259.4 629.7,246.2 630.4,259.4 631.1,276.5 631.8,280.7 632.5,271.7 633.2,280.0 633.9,274.5 634.7,272.4 635.4,260.6 636.1,283.0 636.8,256.2 637.5,264.8 638.2,261.2 638.9,276.3 639.6,264.5 640.3,276.5 641.0,262.1 641.7,275.8 642.5,261.0 643.2,274.7 643.9,266.1 644.6,264.8 645.3,256.8 646.0,266.4 646.7,269.1 647.4,274.7 648.1,267.7 648.8,273.4 649.5,261.6 650.2,264.9 651.0,255.4 651.7,268.3 652.4,270.6 653.1,279.4 653.8,267.4 654.5,278.1 655.2,273.1 655.9,276.2 656.6,268.4 657.3,265.6 658.0,257.7 658.7,267.1 659.5,274.1 660.2,277.3 660.9,263.7 661.6,269.4 662.3,265.6 663.0,277.3" fill="none" stroke="#ff10e8" stroke-width="1.0"/>
<rect x="380" y="126" width="284" height="164.5" fill="none" stroke="#a0a0a0" stroke-width="2"/>
<!-- Spectrum -->
<g stroke="#888888" stroke-width="1" shape-rendering="crispEdges"><path d="M71.5 372.0V538.0"/><path d="M100.5 372.0V538.0"/><path d="M129.5 372.0V538.0"/><path d="M157.5 372.0V538.0"/><path d="M185.5 372.0V538.0"/><path d="M214.5 372.0V538.0"/><path d="M243.5 372.0V538.0"/><path d="M271.5 372.0V538.0"/><path d="M299.5 372.0V538.0"/><path d="M44.0 388.5H329.0"/><path d="M44.0 404.5H329.0"/><path d="M44.0 421.5H329.0"/><path d="M44.0 437.5H329.0"/><path d="M44.0 454.5H329.0"/><path d="M44.0 471.5H329.0"/><path d="M44.0 487.5H329.0"/><path d="M44.0 504.5H329.0"/><path d="M44.0 520.5H329.0"/></g>
<polyline points="45.0,519.5 45.4,534.9 45.7,518.5 46.1,527.8 46.4,524.0 46.8,522.1 47.1,525.1 47.5,528.2 47.8,532.2 48.2,519.8 48.5,517.3 48.9,530.9 49.3,520.3 49.6,533.8 50.0,519.5 50.3,527.2 50.7,525.6 51.0,519.0 51.4,523.1 51.7,523.4 52.1,527.1 52.4,516.0 52.8,527.0 53.1,519.4 53.5,537.0 53.9,513.4 54.2,510.9 54.6,531.2 54.9,523.6 55.3,535.3 55.6,524.2 56.0,514.6 56.3,520.5 56.7,533.5 57.0,510.7 57.4,521.2 57.8,537.0 58.1,525.4 58.5,533.0 58.8,514.2 59.2,524.8 59.5,522.4 59.9,515.4 60.2,521.0 60.6,537.0 60.9,537.0 61.3,531.6 61.6,518.9 62.0,520.0 62.4,525.6 62.7,526.8 63.1,537.0 63.4,537.0 63.8,519.7 64.1,516.4 64.5,522.3 64.8,518.6 65.2,523.5 65.5,537.0 65.9,537.0 66.3,516.3 66.6,514.7 67.0,509.5 67.3,526.9 67.7,517.7 68.0,517.6 68.4,519.1 68.7,515.8 69.1,511.6 69.4,530.5 69.8,517.8 70.1,524.3 70.5,515.7 70.9,513.3 71.2,512.2 71.6,517.2 71.9,513.1 72.3,534.6 72.6,536.4 73.0,524.2 73.3,518.0 73.7,516.1 74.0,515.4 74.4,533.8 74.8,518.7 75.1,521.3 75.5,531.9 75.8,522.9 76.2,516.8 76.5,532.0 76.9,513.9 77.2,532.1 77.6,537.0 77.9,525.5 78.3,516.8 78.6,516.8 79.0,514.7 79.4,531.4 79.7,529.8 80.1,530.3 80.4,530.2 80.8,524.0 81.1,507.7 81.5,518.8 81.8,526.1 82.2,511.3 82.5,521.1 82.9,537.0 83.3,537.0 83.6,521.3 84.0,530.8 84.3,528.1 84.7,525.2 85.0,520.4 85.4,512.6 85.7,536.8 86.1,512.9 86.4,523.9 86.8,526.8 87.1,527.5 87.5,525.6 87.9,524.1 88.2,524.7 88.6,515.2 88.9,526.1 89.3,529.0 89.6,512.6 90.0,516.8 90.3,537.0 90.7,521.2 91.0,519.8 91.4,532.9 91.8,526.2 92.1,531.3 92.5,537.0 92.8,522.1 93.2,537.0 93.5,523.2 93.9,522.8 94.2,520.4 94.6,515.0 94.9,537.0 95.3,531.4 95.6,519.0 96.0,523.9 96.4,531.4 96.7,530.9 97.1,531.0 97.4,513.0 97.8,525.0 98.1,520.8 98.5,520.9 98.8,517.3 99.2,522.7 99.5,524.9 99.9,518.1 100.3,526.5 100.6,536.0 101.0,506.8 101.3,512.6 101.7,523.3 102.0,517.9 102.4,515.9 102.7,525.0 103.1,531.3 103.4,532.3 103.8,514.4 104.2,508.7 104.5,523.5 104.9,510.0 105.2,522.9 105.6,523.4 105.9,528.1 106.3,521.0 106.6,524.8 107.0,514.7 107.3,511.7 107.7,518.1 108.0,523.7 108.4,525.4 108.8,510.6 109.1,518.8 109.5,519.8 109.8,537.0 110.2,509.3 110.5,526.1 110.9,522.3 111.2,532.0 111.6,511.0 111.9,514.2 112.3,524.7 112.7,516.4 113.0,507.0 113.4,514.6 113.7,535.7 114.1,537.0 114.4,525.9 114.8,522.6 115.1,529.3 115.5,532.4 115.8,529.3 116.2,511.4 116.5,516.1 116.9,532.5 117.3,523.9 117.6,515.3 118.0,528.0 118.3,521.9 118.7,527.5 119.0,512.7 119.4,522.1 119.7,526.9 120.1,517.6 120.4,529.2 120.8,528.5 121.2,512.8 121.5,514.0 121.9,531.6 122.2,535.9 122.6,514.3 122.9,523.8 123.3,517.0 123.6,525.8 124.0,537.0 124.3,534.3 124.7,523.1 125.0,517.5 125.4,513.3 125.8,526.9 126.1,524.1 126.5,518.1 126.8,518.6 127.2,516.7 127.5,517.4 127.9,521.8 128.2,517.2 128.6,523.5 128.9,516.7 129.3,523.2 129.7,535.1 130.0,516.1 130.4,532.4 130.7,521.5 131.1,517.7 131.4,519.8 131.8,521.1 132.1,510.2 132.5,528.2 132.8,522.3 133.2,517.5 133.5,509.8 133.9,529.2 134.3,537.0 134.6,516.1 135.0,519.5 135.3,523.5 135.7,513.3 136.0,510.1 136.4,525.2 136.7,524.0 137.1,521.1 137.4,524.9 137.8,523.6 138.2,529.2 138.5,515.5 138.9,523.5 139.2,513.6 139.6,515.8 139.9,522.4 140.3,530.5 140.6,537.0 141.0,527.8 141.3,516.1 141.7,521.3 142.0,517.0 142.4,534.9 142.8,514.4 143.1,504.5 143.5,537.0 143.8,525.3 144.2,504.8 144.5,513.0 144.9,511.8 145.2,497.2 145.6,493.3 145.9,484.1 146.3,501.4 146.7,490.4 147.0,502.5 147.4,485.7 147.7,475.7 148.1,483.4 148.4,476.2 148.8,470.0 149.1,486.2 149.5,472.2 149.8,466.9 150.2,451.7 150.5,455.3 150.9,455.5 151.3,463.3 151.6,448.1 152.0,461.3 152.3,447.5 152.7,457.3 153.0,440.0 153.4,467.3 153.7,460.6 154.1,438.3 154.4,455.1 154.8,442.5 155.2,446.1 155.5,440.1 155.9,438.2 156.2,440.7 156.6,440.3 156.9,435.5 157.3,449.1 157.6,436.2 158.0,462.2 158.3,434.4 158.7,442.3 159.1,436.6 159.4,450.7 159.8,429.0 160.1,430.8 160.5,432.3 160.8,433.8 161.2,435.2 161.5,465.2 161.9,440.9 162.2,448.0 162.6,456.0 162.9,436.3 163.3,426.1 163.7,428.3 164.0,442.6 164.4,447.2 164.7,438.1 165.1,451.4 165.4,433.7 165.8,431.7 166.1,437.9 166.5,432.0 166.8,448.3 167.2,432.2 167.6,444.4 167.9,440.0 168.3,430.8 168.6,440.1 169.0,434.1 169.3,447.8 169.7,459.2 170.0,430.0 170.4,430.9 170.7,434.5 171.1,440.3 171.4,447.2 171.8,460.3 172.2,432.8 172.5,431.7 172.9,446.8 173.2,437.1 173.6,440.1 173.9,440.4 174.3,440.6 174.6,439.9 175.0,456.8 175.3,447.4 175.7,447.0 176.1,442.4 176.4,442.7 176.8,427.6 177.1,430.7 177.5,436.3 177.8,443.1 178.2,438.9 178.5,440.6 178.9,443.1 179.2,432.8 179.6,434.7 179.9,435.9 180.3,443.1 180.7,442.3 181.0,443.4 181.4,436.5 181.7,435.5 182.1,433.9 182.4,438.8 182.8,445.1 183.1,434.1 183.5,437.8 183.8,429.0 184.2,443.0 184.6,450.0 184.9,433.3 185.3,474.1 185.6,450.1 186.0,438.0 186.3,436.4 186.7,446.4 187.0,461.8 187.4,439.1 187.7,434.6 188.1,426.3 188.4,444.7 188.8,444.8 189.2,436.1 189.5,434.5 189.9,445.4 190.2,453.0 190.6,446.5 190.9,446.5 191.3,439.9 191.6,448.6 192.0,455.9 192.3,428.8 192.7,438.1 193.1,466.4 193.4,435.9 193.8,449.1 194.1,442.5 194.5,439.2 194.8,435.6 195.2,429.0 195.5,446.5 195.9,460.5 196.2,448.3 196.6,444.2 196.9,447.7 197.3,441.9 197.7,441.8 198.0,429.7 198.4,429.7 198.7,441.5 199.1,443.3 199.4,432.0 199.8,436.2 200.1,431.9 200.5,441.9 200.8,464.8 201.2,445.0 201.6,448.3 201.9,437.8 202.3,438.4 202.6,453.0 203.0,434.1 203.3,436.6 203.7,442.1 204.0,441.5 204.4,440.9 204.7,436.6 205.1,440.5 205.4,431.5 205.8,437.7 206.2,443.3 206.5,434.6 206.9,438.6 207.2,448.8 207.6,436.9 207.9,431.7 208.3,441.0 208.6,438.6 209.0,455.9 209.3,458.0 209.7,446.3 210.1,429.6 210.4,453.3 210.8,444.5 211.1,437.1 211.5,431.8 211.8,429.2 212.2,437.4 212.5,459.6 212.9,441.5 213.2,431.6 213.6,444.8 213.9,473.6 214.3,430.8 214.7,431.8 215.0,435.7 215.4,449.8 215.7,435.9 216.1,452.0 216.4,446.6 216.8,464.1 217.1,448.0 217.5,433.4 217.8,438.0 218.2,440.7 218.6,443.4 218.9,454.1 219.3,462.5 219.6,455.4 220.0,443.0 220.3,451.3 220.7,469.1 221.0,459.4 221.4,456.5 221.7,465.8 222.1,470.9 222.5,459.4 222.8,452.9 223.2,470.9 223.5,468.5 223.9,464.2 224.2,472.0 224.6,473.8 224.9,475.3 225.3,476.3 225.6,503.9 226.0,487.4 226.3,506.6 226.7,505.0 227.1,516.7 227.4,510.6 227.8,496.6 228.1,517.1 228.5,535.0 228.8,518.4 229.2,508.6 229.5,515.2 229.9,516.7 230.2,516.3 230.6,525.7 231.0,516.5 231.3,522.5 231.7,526.9 232.0,528.3 232.4,509.6 232.7,516.6 233.1,521.2 233.4,522.1 233.8,520.2 234.1,537.0 234.5,537.0 234.8,519.4 235.2,518.9 235.6,514.0 235.9,520.1 236.3,517.5 236.6,521.0 237.0,524.5 237.3,523.3 237.7,511.6 238.0,512.6 238.4,514.2 238.7,520.9 239.1,530.0 239.5,537.0 239.8,513.4 240.2,535.7 240.5,525.6 240.9,516.0 241.2,530.3 241.6,516.4 241.9,529.1 242.3,516.6 242.6,518.2 243.0,527.6 243.3,526.1 243.7,525.5 244.1,520.8 244.4,513.5 244.8,521.4 245.1,524.2 245.5,524.8 245.8,531.6 246.2,519.0 246.5,522.5 246.9,513.9 247.2,522.0 247.6,511.5 248.0,523.7 248.3,522.1 248.7,531.3 249.0,516.5 249.4,537.0 249.7,531.4 250.1,526.7 250.4,515.4 250.8,520.1 251.1,526.9 251.5,513.2 251.8,515.6 252.2,537.0 252.6,529.0 252.9,518.5 253.3,514.6 253.6,517.5 254.0,514.2 254.3,534.2 254.7,537.0 255.0,523.6 255.4,537.0 255.7,519.1 256.1,513.2 256.5,524.1 256.8,520.8 257.2,524.9 257.5,532.1 257.9,534.7 258.2,518.1 258.6,513.6 258.9,525.4 259.3,533.6 259.6,515.6 260.0,528.3 260.3,517.0 260.7,519.3 261.1,526.9 261.4,522.1 261.8,525.3 262.1,534.2 262.5,529.6 262.8,520.9 263.2,516.7 263.5,536.6 263.9,530.6 264.2,537.0 264.6,509.5 265.0,535.4 265.3,525.0 265.7,537.0 266.0,522.4 266.4,519.7 266.7,521.9 267.1,518.8 267.4,529.9 267.8,513.3 268.1,517.0 268.5,530.9 268.8,523.4 269.2,537.0 269.6,515.6 269.9,513.8 270.3,521.9 270.6,525.6 271.0,516.3 271.3,525.7 271.7,537.0 272.0,519.1 272.4,524.4 272.7,507.0 273.1,522.1 273.5,534.8 273.8,516.7 274.2,511.3 274.5,534.5 274.9,526.6 275.2,522.7 275.6,518.3 275.9,518.3 276.3,519.9 276.6,514.8 277.0,517.7 277.4,537.0 277.7,510.7 278.1,515.6 278.4,518.9 278.8,516.7 279.1,515.7 279.5,537.0 279.8,519.7 280.2,533.3 280.5,528.4 280.9,515.8 281.2,521.4 281.6,527.1 282.0,530.9 282.3,522.8 282.7,535.5 283.0,525.0 283.4,514.9 283.7,525.3 284.1,522.0 284.4,511.9 284.8,525.5 285.1,527.8 285.5,524.2 285.9,524.8 286.2,511.3 286.6,537.0 286.9,532.8 287.3,516.7 287.6,537.0 288.0,523.7 288.3,518.5 288.7,537.0 289.0,526.7 289.4,527.8 289.7,522.1 290.1,519.9 290.5,517.1 290.8,536.1 291.2,528.9 291.5,517.2 291.9,514.5 292.2,526.5 292.6,537.0 292.9,533.4 293.3,516.5 293.6,533.8 294.0,529.9 294.4,530.9 294.7,524.2 295.1,519.5 295.4,533.5 295.8,523.0 296.1,512.7 296.5,522.5 296.8,522.6 297.2,517.7 297.5,521.2 297.9,523.6 298.2,515.3 298.6,533.3 299.0,530.3 299.3,509.0 299.7,528.2 300.0,537.0 300.4,532.1 300.7,512.1 301.1,531.2 301.4,521.7 301.8,517.7 302.1,537.0 302.5,527.7 302.9,517.7 303.2,527.9 303.6,525.7 303.9,521.1 304.3,516.3 304.6,526.8 305.0,532.2 305.3,537.0 305.7,527.9 306.0,519.0 306.4,513.3 306.7,522.3 307.1,533.0 307.5,520.0 307.8,536.2 308.2,533.9 308.5,533.4 308.9,512.8 309.2,520.0 309.6,537.0 309.9,512.7 310.3,524.8 310.6,532.0 311.0,518.9 311.4,522.1 311.7,519.8 312.1,523.6 312.4,529.7 312.8,537.0 313.1,519.2 313.5,522.7 313.8,523.9 314.2,520.0 314.5,522.4 314.9,513.2 315.2,517.8 315.6,512.8 316.0,529.3 316.3,519.9 316.7,513.5 317.0,517.0 317.4,524.8 317.7,517.6 318.1,520.7 318.4,527.2 318.8,517.6 319.1,536.0 319.5,536.1 319.9,530.7 320.2,532.7 320.6,514.6 320.9,529.4 321.3,510.5 321.6,537.0 322.0,537.0 322.3,524.1 322.7,519.9 323.0,519.7 323.4,535.0 323.7,521.8 324.1,531.2 324.5,528.9 324.8,528.8 325.2,528.1 325.5,514.7 325.9,516.2 326.2,532.6 326.6,518.7 326.9,529.4 327.3,537.0 327.6,537.0 328.0,517.3" fill="none" stroke="#00f0f0" stroke-width="1"/>
<rect x="44" y="372" width="285" height="166" fill="none" stroke="#a0a0a0" stroke-width="2"/>
<!-- symbol table double line -->
<path d="M344 526.5H670M344 529.5H670" stroke="#00b050" stroke-width="1"/>
</svg>

<!-- panel 1 text -->
<div class="pt" style="left:8px;top:91px;line-height:15px">Ch1 QPSK Meas Time</div>
<div class="sm" style="left:8px;top:114px;line-height:12px">300 m/div</div>
<div class="sm" style="left:8px;top:126px;line-height:12px">I-Q</div>
<div class="wb" style="left:71px;top:110px;line-height:14px">Ref 0</div>
<div class="yl" style="left:1px;width:40px;top:136.3px;font-size:11px;color:#a8a8a8">1.2</div><div class="yl" style="left:1px;width:40px;top:152.8px;font-size:11px;color:#a8a8a8">900m</div><div class="yl" style="left:1px;width:40px;top:169.2px;font-size:11px;color:#a8a8a8">600m</div><div class="yl" style="left:1px;width:40px;top:185.7px;font-size:11px;color:#a8a8a8">300m</div><div class="yl" style="left:1px;width:40px;top:202.2px;font-size:11px;color:#a8a8a8">0</div><div class="yl" style="left:1px;width:40px;top:218.7px;font-size:11px;color:#a8a8a8">-300m</div><div class="yl" style="left:1px;width:40px;top:235.1px;font-size:11px;color:#a8a8a8">-600m</div><div class="yl" style="left:1px;width:40px;top:251.6px;font-size:11px;color:#a8a8a8">-900m</div><div class="yl" style="left:1px;width:40px;top:268.1px;font-size:11px;color:#a8a8a8">-1.2</div>
<div class="wb" style="left:8px;top:292px;line-height:14px;font-weight:normal">-2.582547</div>
<div class="wb" style="left:240px;width:81px;text-align:right;top:292px;line-height:14px;font-weight:normal">2.5825472</div>

<!-- panel 2 text -->
<div class="pt" style="left:344px;top:91px;line-height:15px">Ch1 QPSK Err Vect Time</div>
<div class="sm" style="left:344px;top:114px;line-height:12px;letter-spacing:0.35px">500 m%/div</div>
<div class="sm" style="left:344px;top:126px;line-height:12px">Mag</div>
<div class="wb" style="left:407px;top:110px;line-height:14px">Ref 0 %</div>
<div class="yl" style="left:338px;width:40px;top:151.2px;font-size:11px;color:#a8a8a8">4</div><div class="yl" style="left:338px;width:40px;top:167.9px;font-size:11px;color:#a8a8a8">3.5</div><div class="yl" style="left:338px;width:40px;top:184.7px;font-size:11px;color:#a8a8a8">3</div><div class="yl" style="left:338px;width:40px;top:201.4px;font-size:11px;color:#a8a8a8">2.5</div><div class="yl" style="left:338px;width:40px;top:218.2px;font-size:11px;color:#a8a8a8">2</div><div class="yl" style="left:338px;width:40px;top:234.9px;font-size:11px;color:#a8a8a8">1.5</div><div class="yl" style="left:338px;width:40px;top:251.6px;font-size:11px;color:#a8a8a8">1</div><div class="yl" style="left:338px;width:40px;top:268.4px;font-size:11px;color:#a8a8a8">500m</div>
<div class="wb" style="left:344px;top:292px;line-height:14px">Start 0&nbsp; sym</div>
<div class="wb" style="left:540px;width:123px;text-align:right;top:292px;line-height:14px">Stop 199&nbsp; sym</div>

<!-- panel 3 text -->
<div class="pt" style="left:8px;top:337px;line-height:15px">Ch1 Spectrum</div>
<div class="sm" style="left:8px;top:360px;line-height:12px">10 dB/div</div>
<div class="sm" style="left:8px;top:372px;line-height:12px">Log</div>
<div class="wb" style="left:71px;top:356px;line-height:14px">Ref 10 dBm</div>
<div class="yl" style="left:1px;width:40px;top:379.8px;font-size:11px;color:#a8a8a8">0</div><div class="yl" style="left:1px;width:40px;top:396.6px;font-size:11px;color:#a8a8a8">-10</div><div class="yl" style="left:1px;width:40px;top:413.4px;font-size:11px;color:#a8a8a8">-20</div><div class="yl" style="left:1px;width:40px;top:430.2px;font-size:11px;color:#a8a8a8">-30</div><div class="yl" style="left:1px;width:40px;top:447.0px;font-size:11px;color:#a8a8a8">-40</div><div class="yl" style="left:1px;width:40px;top:463.8px;font-size:11px;color:#a8a8a8">-50</div><div class="yl" style="left:1px;width:40px;top:480.6px;font-size:11px;color:#a8a8a8">-60</div><div class="yl" style="left:1px;width:40px;top:497.4px;font-size:11px;color:#a8a8a8">-70</div><div class="yl" style="left:1px;width:40px;top:514.2px;font-size:11px;color:#a8a8a8">-80</div>
<div class="wb" style="left:8px;top:539px;line-height:14px">Center 1 GHz</div>
<div class="wb" style="left:8px;top:555px;line-height:14px;letter-spacing:0.33px">Res BW 15.914 kHz</div>
<div class="wb" style="left:200px;width:128px;text-align:right;top:539px;line-height:14px;letter-spacing:0.5px">Span 5 MHz</div>
<div class="wb" style="left:200px;width:128px;text-align:right;top:555px;line-height:14px;letter-spacing:0.45px">TimeLen 240 us</div>

<!-- panel 4 text -->
<div class="pt" style="left:344px;top:337px;line-height:15px">Ch1 QPSK Syms/Errs</div>
<div class="g" style="left:347px;top:360.3px">EVM</div><div class="g" style="left:414px;top:360.3px">=&nbsp; 542.92</div><div class="g" style="left:491px;top:360.3px">m%rms</div><div class="g" style="left:351px;top:375.1px">1.1038</div><div class="g" style="left:428px;top:375.1px">% pk&nbsp; at</div><div class="g" style="left:484px;top:375.1px">sym</div><div class="g" style="left:520px;width:34px;text-align:right;top:375.1px">4</div><div class="g" style="left:347px;top:389.9px">Mag Err</div><div class="g" style="left:414px;top:389.9px">=&nbsp; 449.61</div><div class="g" style="left:491px;top:389.9px">m%rms</div><div class="g" style="left:349px;top:404.7px">-991.69</div><div class="g" style="left:421px;top:404.7px">m%pk&nbsp; at</div><div class="g" style="left:484px;top:404.7px">sym</div><div class="g" style="left:520px;width:34px;text-align:right;top:404.7px">135</div><div class="g" style="left:347px;top:419.5px">Phase Err</div><div class="g" style="left:414px;top:419.5px">=&nbsp; 174.41</div><div class="g" style="left:498px;top:419.5px">mdeg</div><div class="g" style="left:351px;top:434.3px">551.56</div><div class="g" style="left:406px;top:434.3px">mdeg pk&nbsp; at</div><div class="g" style="left:484px;top:434.3px">sym</div><div class="g" style="left:520px;width:34px;text-align:right;top:434.3px">4</div><div class="g" style="left:347px;top:449.1px">Freq Err</div><div class="g" style="left:414px;top:449.1px">=&nbsp; 3.9260</div><div class="g" style="left:512px;top:449.1px">Hz</div><div class="g" style="left:347px;top:463.9px">SNR (MER)</div><div class="g" style="left:414px;top:463.9px">=&nbsp; 45.305</div><div class="g" style="left:512px;top:463.9px">dB</div><div class="g" style="left:347px;top:478.7px">IQ Offset</div><div class="g" style="left:414px;top:478.7px">=&nbsp; -51.76</div><div class="g" style="left:512px;top:478.7px">dB</div><div class="g" style="left:347px;top:493.5px">Rho</div><div class="g" style="left:414px;top:493.5px">=&nbsp; 0.99996</div><div class="g" style="left:347px;top:508.3px">Quad Err</div><div class="g" style="left:414px;top:508.3px">=&nbsp; -420.27</div><div class="g" style="left:498px;top:508.3px">mdeg</div><div class="g" style="left:340px;width:42px;text-align:right;top:538px;letter-spacing:0.6px">0</div><div class="g" style="left:392.0px;top:538px;letter-spacing:1.05px">10111010</div><div class="g" style="left:462.4px;top:538px;letter-spacing:1.05px">00010110</div><div class="g" style="left:532.8px;top:538px;letter-spacing:1.05px">00111010</div><div class="g" style="left:603.2px;top:538px;letter-spacing:1.05px">10110100</div><div class="g" style="left:340px;width:42px;text-align:right;top:553px;letter-spacing:0.6px">32</div><div class="g" style="left:392.0px;top:553px;letter-spacing:1.05px">00011111</div><div class="g" style="left:462.4px;top:553px;letter-spacing:1.05px">01011101</div><div class="g" style="left:532.8px;top:553px;letter-spacing:1.05px">00100001</div><div class="g" style="left:603.2px;top:553px;letter-spacing:1.05px">01011001</div>

<!-- softkey panel -->
<div style="left:675px;top:23px;width:121px;height:551px;background:linear-gradient(#16305a 0px,#2a5a90 2px,#336699 4px);border-left:1px solid #1c3a5c"></div>
<div style="left:676px;top:31px;width:120px;text-align:center;font-size:12.5px;font-weight:bold;color:#fff;line-height:16px">Demod Setup</div>
<div class="key" style="top:55px"><div class="k1" style="right:12.5px">Meas Filter</div><div class="k2" style="right:12.5px">RRC</div><div class="arr"></div></div><div class="key" style="top:129px"><div class="k1" style="right:12.5px">Ref Filter</div><div class="k2" style="right:12.5px">Raised Cosine</div><div class="arr"></div></div><div class="key sel" style="top:203px"><div class="k1" style="right:4px">Alpha / BT</div><div class="k2" style="right:4px">0.35</div></div><div class="key" style="top:277px"><div class="k1" style="right:12.5px;top:14px">Burst / Sync</div><div class="k1 k1b" style="right:12.5px">Search</div><div class="arr"></div></div><div class="key" style="top:351px"><div class="k1" style="right:12.5px;top:14px">Advanced</div><div class="k1 k1b" style="right:12.5px">Dig Demod</div><div class="arr"></div></div><div class="key" style="top:500px"><div class="k1" style="right:4px">More</div><div class="k2" style="right:4px">2 of 2</div></div>

<!-- bottom status bar -->
<div style="left:3px;top:572px;width:672px;height:4px;background:#ccc8ba"></div>
<div style="left:3px;top:574px;width:793px;height:1.5px;background:#5c564e"></div>
<div style="left:3px;top:575.5px;width:793px;height:19.5px;background:#e6e3e8"></div>
<div style="left:3px;top:595px;width:793px;height:1.5px;background:#8c8680"></div>
<div style="left:26px;top:575px;width:2px;height:20px;background:linear-gradient(90deg,#a8a29c,#f4f2f4)"></div>
<div style="left:506px;top:575px;width:2px;height:20px;background:linear-gradient(90deg,#a8a29c,#f4f2f4)"></div>
<div style="left:544px;top:575px;width:2px;height:20px;background:linear-gradient(90deg,#a8a29c,#f4f2f4)"></div>
<div style="left:5px;top:579px;font-size:8.5px;line-height:11px;color:#222">MSG</div>
<div style="left:509px;top:579px;font-size:8.5px;line-height:11px;color:#222">STATUS</div>
</body></html>
